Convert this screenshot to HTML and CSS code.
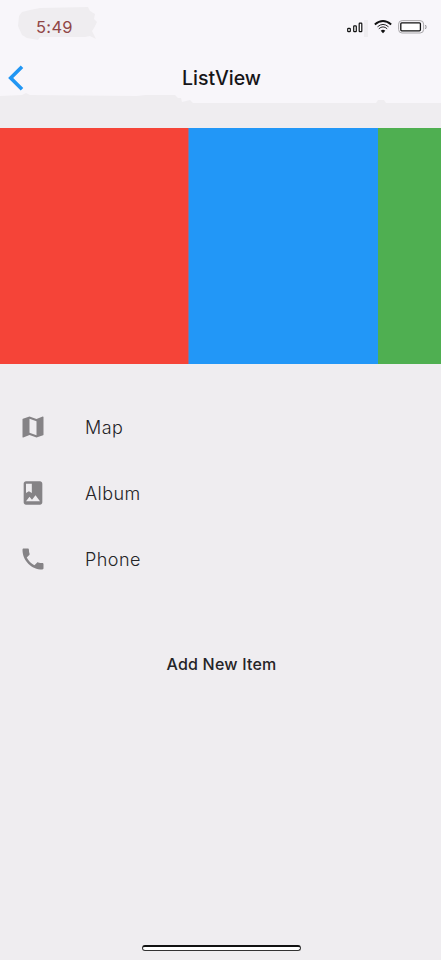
FILE: index.html
```html
<!DOCTYPE html>
<html lang="en">
<head>
<meta charset="utf-8">
<title>ListView</title>
<link rel="stylesheet" href="styles.css">
</head>
<body>
<div class="screen">
  <header class="header">
    <svg class="header-shade" width="441" height="103" viewBox="0 0 441 103" fill="#efedf0">
      <path d="M22 12 30 10 40 8 88 7 90 11 95 14 94 19 97 22 94 28 92 31 96 39 90 36 85 37 40 37 38 40 27 38 22 35 18 26 19 16Z"/>
      <path d="M0 96 22 95 26 93 30 95 137 96 145 95 175 95 178 98 181 98 182 102 190 100 193 103H0ZM376 103 378 100H384L386 103ZM364 20h4v17h-4Z"/>
    </svg>
    <div class="status">
      <span class="time">5:49</span>
      <div class="indicators">
        <svg width="16" height="12" viewBox="0 0 16 12" fill="#fff" stroke="#111" stroke-width="1.2">
          <rect x=".7" y="7.3" width="2.6" height="3.4" rx=".8"/><rect x="6.7" y="4.8" width="2.6" height="5.9" rx=".6"/><rect x="12.2" y="2.2" width="2.6" height="8.5" rx=".6"/>
        </svg>
        <svg class="wifi" width="18" height="14" viewBox="0 0 18 14" fill="none" stroke="#111">
          <path stroke-width="1.8" d="M.8 4.5Q9-2.5 17.2 4.5"/>
          <path stroke-width=".9" d="M3.5 6.8Q9 2 14.5 6.8M4.8 8.8Q9 5 13.2 8.8"/>
          <path fill="#111" stroke="none" d="M6.7 10.7Q9 9 11.3 10.7L9 13.2Z"/>
        </svg>
        <svg class="battery" width="29" height="14" viewBox="0 0 29 14" fill="none">
          <rect x=".6" y=".6" width="25" height="12.4" rx="3.5" stroke="#aaa8ab"/>
          <rect x="2.8" y="2.8" width="19.6" height="8" rx="1" fill="#fff" stroke="#111" stroke-width="1.3"/>
          <path d="M27.5 5q1.3 2 0 4" stroke="#929094"/>
        </svg>
      </div>
    </div>
    <div class="navbar">
      <svg class="back" width="16" height="26" viewBox="0 0 16 26" fill="none" stroke="#2196f3" stroke-width="3.6"><path d="M14 1.8 2.7 13 14 24.2"/></svg>
      <h1 class="title">ListView</h1>
      <span></span>
    </div>
  </header>
  <div class="cards">
    <div class="card red"></div>
    <div class="card blue"></div>
    <div class="card green"></div>
  </div>
  <ul class="list">
    <li class="item">
      <svg class="icon" viewBox="0 0 24 24"><path d="M20.5 3l-.16.03L15 5.1 9 3 3.36 4.9c-.21.07-.36.25-.36.48V20.5c0 .28.22.5.5.5l.16-.03L9 18.9l6 2.1 5.64-1.9c.21-.07.36-.25.36-.48V3.5c0-.28-.22-.5-.5-.5zM15 19l-6-2.11V5l6 2.11V19z"/></svg>
      <span>Map</span>
    </li>
    <li class="item">
      <svg class="icon" viewBox="0 0 24 24"><path d="M18 2H6c-1.1 0-2 .9-2 2v16c0 1.1.9 2 2 2h12c1.1 0 2-.9 2-2V4c0-1.1-.9-2-2-2zM6 4h5v8l-2.5-1.5L6 12V4zm0 15l3-3.86 2.14 2.58 3-3.86L18 19H6z"/></svg>
      <span>Album</span>
    </li>
    <li class="item">
      <svg class="icon" viewBox="0 0 24 24"><path d="M6.62 10.79c1.44 2.83 3.76 5.14 6.59 6.59l2.2-2.2c.27-.27.67-.36 1.02-.24 1.12.37 2.33.57 3.57.57.55 0 1 .45 1 1V20c0 .55-.45 1-1 1-9.39 0-17-7.61-17-17 0-.55.45-1 1-1h3.5c.55 0 1 .45 1 1 0 1.25.2 2.45.57 3.57.11.35.03.74-.25 1.02l-2.2 2.2z"/></svg>
      <span>Phone</span>
    </li>
  </ul>
  <button class="add">Add New Item</button>
  <div class="home-bar"></div>
</div>
</body>
</html>
```
FILE: styles.css
```css
* { box-sizing: border-box; }
body { margin: 0; background: #efedf0; font-family: Inter, "Liberation Sans", sans-serif; color: #252427; }
.screen { width: 441px; height: 960px; display: flex; flex-direction: column; overflow: hidden; }
.header { position: relative; height: 103px; flex: none; background: #f8f6fa; }
.header-shade { position: absolute; left: 0; top: 0; }
.status { position: relative; height: 54px; padding: 0 14px 0 36px; display: flex; align-items: center; justify-content: space-between; }
.time { font-size: 16.5px; letter-spacing: .3px; color: #914646; }
.indicators { display: flex; align-items: center; }
.indicators svg { display: block; }
.indicators .wifi { margin-left: 11px; }
.indicators .battery { margin-left: 6px; }
.navbar { position: relative; height: 47px; display: grid; grid-template-columns: 100px 1fr 100px; align-items: center; }
.back { margin-left: 8px; }
.title { margin: 0; padding-left: 2px; text-align: center; font-size: 19.5px; font-weight: 500; color: #161518; }
.cards { display: flex; flex: none; height: 236px; margin-top: 25px; margin-bottom: 30px; overflow: hidden; }
.card { flex: 0 0 189px; }
.red { background: #f54438; border-right: 1px solid #8b719b; }
.blue { background: #2297f7; }
.green { background: #4faf51; }
.list { margin: 0; padding: 0; list-style: none; }
.item { height: 66px; padding-left: 18.6px; display: flex; align-items: center; gap: 38.4px; font-size: 18px; font-weight: 350; letter-spacing: .45px; }
.icon { width: 28px; height: 28px; fill: #858386; }
.add { align-self: center; margin-top: 52px; height: 40px; padding: 0 0 0 2px; border: 0; background: none; color: #252427; font: 500 16px Inter, sans-serif; letter-spacing: .2px; }
.home-bar { flex: none; width: 159px; height: 6px; margin: auto auto 9px 142px; border: 1px solid #333; border-top: 2px solid #111; border-radius: 3px; background: #fff; }
```
